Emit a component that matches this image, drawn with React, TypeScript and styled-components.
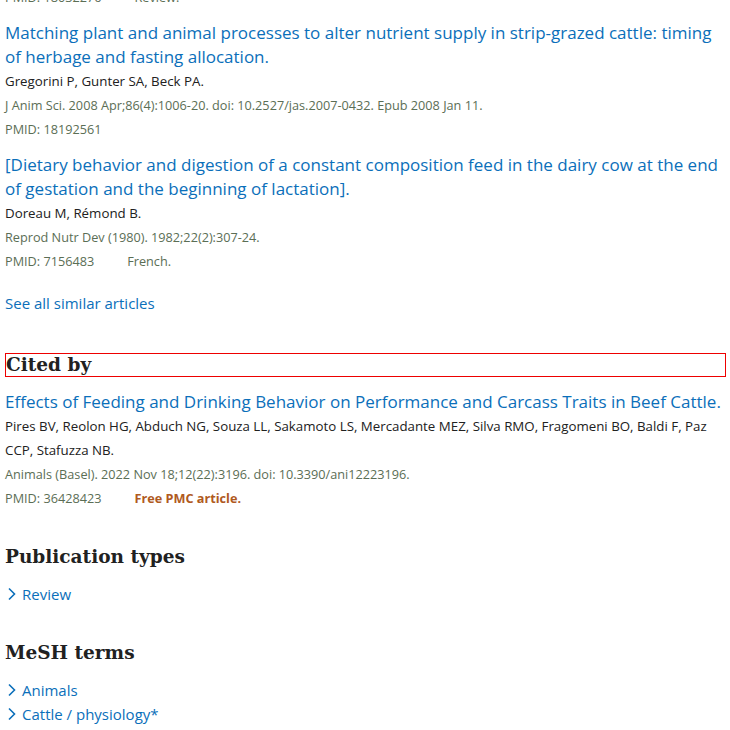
import React from "react";
import styled, { createGlobalStyle } from "styled-components";

const Global = createGlobalStyle`
  html, body { margin: 0; padding: 0; background: #fff; }
  body { font-family: "Open Sans", "Noto Sans", sans-serif; }
`;

const Page = styled.div`
  width: 721px;
  padding: 0 4px 0 5px;
  margin-top: -15px;
`;

const Article = styled.div<{ $top?: number }>`
  margin-top: ${(p) => p.$top ?? 12}px;
`;

const Title = styled.a`
  display: block;
  color: #0b6fba;
  font-size: 17px;
  line-height: 24px;
  text-decoration: none;
`;

const Authors = styled.div`
  color: #212121;
  font-size: 13.3px;
  line-height: 24px;
`;

const Citation = styled.div`
  color: #5b6e55;
  font-size: 12.7px;
  line-height: 24px;
`;

const Extra = styled.span<{ $free?: boolean }>`
  margin-left: 33px;
  color: ${(p) => (p.$free ? "#b05a1e" : "#5b6e55")};
  font-weight: ${(p) => (p.$free ? 700 : 400)};
`;

const SeeAll = styled.a`
  display: block;
  color: #0b6fba;
  font-size: 15px;
  line-height: 24px;
  margin-top: 18px;
  text-decoration: none;
`;

const Heading = styled.h2<{ $boxed?: boolean }>`
  font-family: "DejaVu Serif", "Liberation Serif", serif;
  font-weight: 700;
  font-size: 18.5px;
  line-height: 22px;
  color: #212121;
  margin: 0;
  padding: 0;
  border: ${(p) => (p.$boxed ? "1px solid #e00" : "none")};
`;

const Section = styled.section<{ $top: number }>`
  margin-top: ${(p) => p.$top}px;
`;

const List = styled.ul`
  list-style: none;
  margin: 14px 0 0;
  padding: 0;
`;

const Item = styled.li`
  display: flex;
  align-items: center;
  gap: 4px;
  color: #0b6fba;
  font-size: 15px;
  line-height: 24px;
  padding-left: 1px;
`;

const Chevron = () => (
  <svg width="12" height="14" viewBox="0 0 12 14" fill="none">
    <path d="M3 1.5 L8.5 7 L3 12.5" stroke="#0b6fba" strokeWidth="1.6" />
  </svg>
);

export default function App() {
  return (
    <Page>
      <Global />
      <Article $top={0}>
        <Citation>
          PMID: 18032276<Extra>Review.</Extra>
        </Citation>
      </Article>
      <Article>
        <Title>
          Matching plant and animal processes to alter nutrient supply in strip-grazed cattle: timing of herbage and fasting allocation.
        </Title>
        <Authors>Gregorini P, Gunter SA, Beck PA.</Authors>
        <Citation>J Anim Sci. 2008 Apr;86(4):1006-20. doi: 10.2527/jas.2007-0432. Epub 2008 Jan 11.</Citation>
        <Citation>PMID: 18192561</Citation>
      </Article>
      <Article>
        <Title>
          [Dietary behavior and digestion of a constant composition feed in the dairy cow at the end of gestation and the beginning of lactation].
        </Title>
        <Authors>Doreau M, Rémond B.</Authors>
        <Citation>Reprod Nutr Dev (1980). 1982;22(2):307-24.</Citation>
        <Citation>
          PMID: 7156483<Extra>French.</Extra>
        </Citation>
      </Article>
      <SeeAll>See all similar articles</SeeAll>
      <Section $top={38}>
        <Heading $boxed>Cited by</Heading>
        <Article $top={13}>
          <Title>Effects of Feeding and Drinking Behavior on Performance and Carcass Traits in Beef Cattle.</Title>
          <Authors>
            Pires BV, Reolon HG, Abduch NG, Souza LL, Sakamoto LS, Mercadante MEZ, Silva RMO, Fragomeni BO, Baldi F, Paz CCP, Stafuzza NB.
          </Authors>
          <Citation>Animals (Basel). 2022 Nov 18;12(22):3196. doi: 10.3390/ani12223196.</Citation>
          <Citation>
            PMID: 36428423<Extra $free>Free PMC article.</Extra>
          </Citation>
        </Article>
      </Section>
      <Section $top={36}>
        <Heading>Publication types</Heading>
        <List>
          <Item>
            <Chevron />
            Review
          </Item>
        </List>
      </Section>
      <Section $top={36}>
        <Heading>MeSH terms</Heading>
        <List>
          <Item>
            <Chevron />
            Animals
          </Item>
          <Item>
            <Chevron />
            Cattle / physiology*
          </Item>
        </List>
      </Section>
    </Page>
  );
}
